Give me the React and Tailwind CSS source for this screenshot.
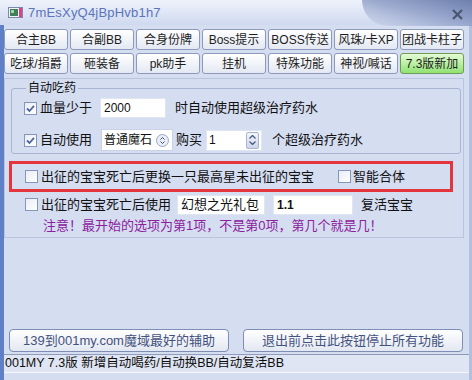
import React from "react";

const FONT = { fontFamily: '"Liberation Sans", "Noto Sans CJK SC", sans-serif' };

const Check = ({ checked }) => (
  <span className="w-[13px] h-[13px] shrink-0 border border-[#8595bb] bg-gradient-to-br from-[#e9edf5] to-white flex items-center justify-center">
    {checked && (
      <svg width="9" height="9" viewBox="0 0 9 9">
        <path d="M1 4.5 L3.5 7 L8 1.8" stroke="#51679c" strokeWidth="1.8" fill="none" />
      </svg>
    )}
  </span>
);

const Btn = ({ children, green }) => (
  <div
    className={
      "w-[64px] h-[21px] rounded-[3px] border flex items-center justify-center whitespace-nowrap text-[12px] text-[#1d1d1d] " +
      (green
        ? "border-[#6f9a57] bg-gradient-to-b from-[#e4fbd4] to-[#8fe271]"
        : "border-[#8d9abb] bg-gradient-to-b from-white to-[#e3e8f2]")
    }
  >
    {children}
  </div>
);

const SpinUD = () => (
  <span className="w-[13px] h-[17px] rounded-[2px] border border-[#a7b3cf] bg-gradient-to-b from-[#f4f6fb] to-[#cdd6ea] flex flex-col items-center justify-center gap-[2px]">
    <svg width="7" height="4" viewBox="0 0 7 4">
      <path d="M0.5 3.5 L3.5 0.5 L6.5 3.5" stroke="#4a5a80" strokeWidth="1.3" fill="none" />
    </svg>
    <svg width="7" height="4" viewBox="0 0 7 4">
      <path d="M0.5 0.5 L3.5 3.5 L6.5 0.5" stroke="#4a5a80" strokeWidth="1.3" fill="none" />
    </svg>
  </span>
);

export default function App() {
  const row1 = ["合主BB", "合副BB", "合身份牌", "Boss提示", "BOSS传送", "风珠/卡XP", "团战卡柱子"];
  const row2 = ["吃球/捐爵", "砸装备", "pk助手", "挂机", "特殊功能", "神视/喊话"];

  return (
    <div className="w-[472px] h-[380px] flex flex-col bg-[#d5ddf1] overflow-hidden text-[13px] text-[#111]" style={FONT}>
      {/* title bar */}
      <div className="h-[25px] shrink-0 relative flex items-center bg-gradient-to-b from-[#eef2fb] to-[#cfd9ef]">
        <div className="absolute right-0 top-0 w-[110px] h-[26px] rounded-bl-[90px] bg-gradient-to-bl from-[#4d6399] via-[#8c9cc6] to-transparent opacity-80" />
        <svg className="ml-[8px]" width="15" height="11" viewBox="0 0 15 11">
          <rect x="0.5" y="0.5" width="14" height="10" fill="#f4f4f4" stroke="#7b8aa8" />
          <rect x="2" y="2" width="8" height="7" fill="#3f7f5a" />
          <rect x="3" y="3" width="3" height="3" fill="#9fd9a8" />
          <rect x="11" y="1" width="3" height="9" fill="#e0408a" />
        </svg>
        <span className="ml-[5px] text-[13px] text-[#5b74bb] tracking-[0.2px]">7mEsXyQ4jBpHvb1h7</span>
        <svg className="absolute right-[9px] top-[9px]" width="11" height="11" viewBox="0 0 11 11">
          <path d="M1 1 L10 10 M10 1 L1 10" stroke="#4a5570" strokeWidth="2.2" />
        </svg>
      </div>

      {/* body */}
      <div className="flex-1 flex flex-col border-l-[4px] border-l-[#5f80c7] border-r-[3px] border-r-[#b3c0dd]">
        <div className="mt-[4px] flex gap-[2px]">
          {row1.map((t) => (
            <Btn key={t}>{t}</Btn>
          ))}
        </div>
        <div className="mt-[3px] flex gap-[2px]">
          {row2.map((t) => (
            <Btn key={t}>{t}</Btn>
          ))}
          <Btn green>7.3版新加</Btn>
        </div>

        {/* panel */}
        <div className="mt-[4px] w-[460px] h-[160px] border border-[#b9c5e0] flex flex-col">
          <fieldset className="mt-[2px] ml-[6px] w-[450px] border border-[#a8b5d3] rounded-[3px] pl-[12px] pb-[2px]">
            <legend className="ml-[2px] px-[2px] text-[12px] leading-[14px]">自动吃药</legend>
            <div className="mt-[3px] h-[20px] flex items-center">
              <Check checked />
              <span className="ml-[3px]">血量少于</span>
              <div className="ml-[8px] w-[66px] h-[20px] bg-white border border-[#dfe5f1] flex items-center pl-[3px] text-[12px]">2000</div>
              <span className="ml-[9px]">时自动使用超级治疗药水</span>
            </div>
            <div className="mt-[11px] h-[22px] flex items-center">
              <Check checked />
              <span className="ml-[3px]">自动使用</span>
              <div className="ml-[9px] w-[72px] h-[22px] shrink-0 bg-white border border-[#c9d2e6] flex items-center pl-[2px] pr-[3px] whitespace-nowrap">
                <span className="text-[12px]">普通魔石</span>
                <span className="ml-auto w-[13px] h-[13px] shrink-0 rounded-full border border-[#9aa8c8] bg-[#e9eef8] flex flex-col items-center justify-center gap-[1px]">
                  <svg width="5" height="3" viewBox="0 0 5 3"><path d="M0.5 2.5 L2.5 0.5 L4.5 2.5" stroke="#3c4c70" strokeWidth="1" fill="none" /></svg>
                  <svg width="5" height="3" viewBox="0 0 5 3"><path d="M0.5 0.5 L2.5 2.5 L4.5 0.5" stroke="#3c4c70" strokeWidth="1" fill="none" /></svg>
                </span>
              </div>
              <span className="ml-[3px]">购买</span>
              <div className="ml-[4px] w-[56px] h-[21px] bg-white border border-[#dfe5f1] flex items-center justify-between pl-[2px] pr-[2px]">
                <span className="text-[12px]">1</span>
                <SpinUD />
              </div>
              <span className="ml-[10px]">个超级治疗药水</span>
            </div>
          </fieldset>

          <div className="mt-[7px] ml-[4px] w-[444px] h-[31px] border-[3px] border-[#e4353d] flex items-center pl-[13px]">
            <Check />
            <span className="ml-[3px]">出征的宝宝死亡后更换一只最高星未出征的宝宝</span>
            <span className="ml-[24px]"><Check /></span>
            <span className="ml-[2px]">智能合体</span>
          </div>

          <div className="mt-[2px] h-[21px] flex items-center pl-[20px]">
            <Check />
            <span className="ml-[3px]">出征的宝宝死亡后使用</span>
            <div className="ml-[6px] w-[88px] h-[20px] bg-white border border-[#dfe5f1] flex items-center pl-[3px]">幻想之光礼包</div>
            <div className="ml-[8px] w-[80px] h-[20px] bg-white border border-[#dfe5f1] flex items-center pl-[3px] text-[12px] font-bold">1.1</div>
            <span className="ml-[8px]">复活宝宝</span>
          </div>

          <div className="mt-[3px] pl-[38px] text-[#8c219e] leading-[16px]">
            注意！最开始的选项为第1项，不是第0项，第几个就是几！
          </div>
        </div>

        <div className="flex-1" />

        <div className="flex gap-[14px] pl-[5px]">
          <div className="w-[220px] h-[23px] rounded-[4px] border border-[#7e8db3] bg-gradient-to-b from-white to-[#e2e7f1] flex items-center justify-center text-[#44527e]">
            139到001my.com魔域最好的辅助
          </div>
          <div className="w-[220px] h-[23px] rounded-[4px] border border-[#7e8db3] bg-gradient-to-b from-white to-[#e2e7f1] flex items-center justify-center text-[#44527e]">
            退出前点击此按钮停止所有功能
          </div>
        </div>

        <div className="mt-[2px] h-[19px] border-t border-[#8e9bbb] border-b border-b-[#f4f6fb] bg-[#dfe5f3] flex items-center pl-[1px] text-[12.5px] text-[#0d0d0d]">
          001MY 7.3版 新增自动喝药/自动换BB/自动复活BB
        </div>
        <div className="h-[7px]" />
      </div>
    </div>
  );
}
